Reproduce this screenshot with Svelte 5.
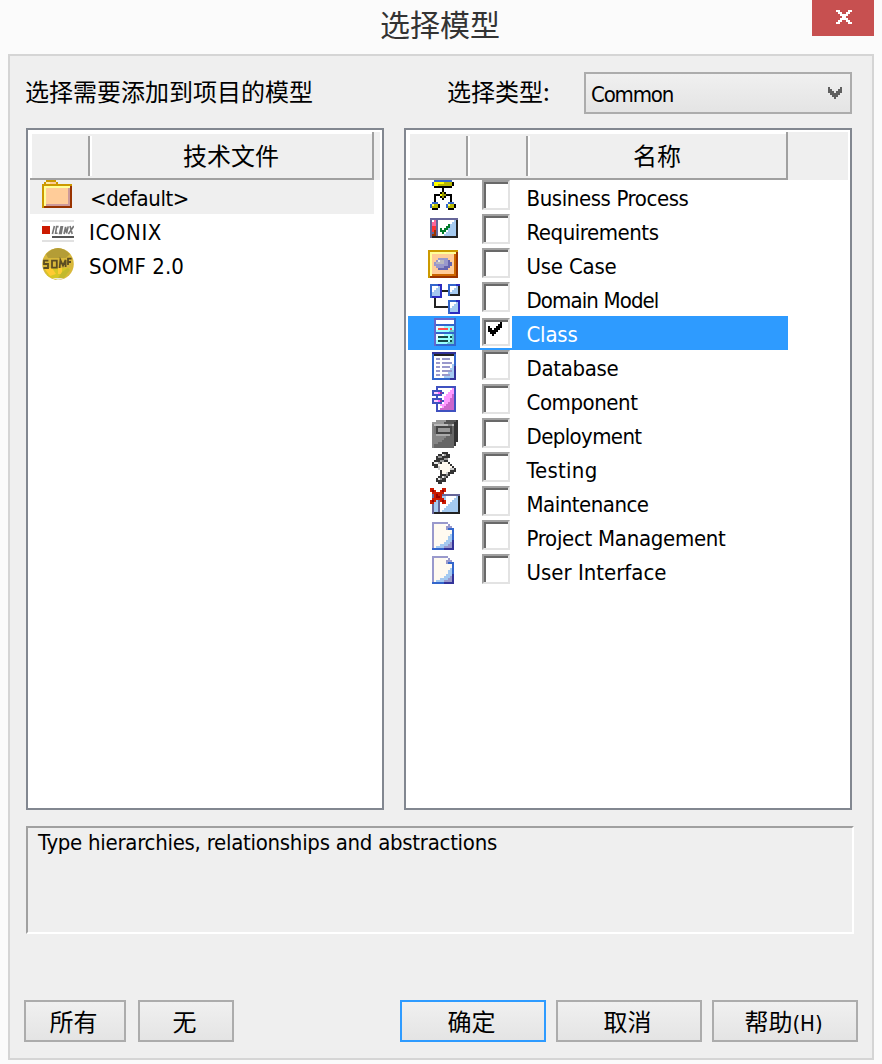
<script>
  const files = [
    { name: '<default>', icon: 'folder', w: 99, pad: 2 },
    { name: 'ICONIX', icon: 'iconix', w: 73, pad: 0 },
    { name: 'SOMF 2.0', icon: 'somf', w: 95, pad: 0 }
  ];
  const models = [
    { name: 'Business Process', icon: 'process', w: 162 },
    { name: 'Requirements', icon: 'requirements', w: 132 },
    { name: 'Use Case', icon: 'usecase', w: 90 },
    { name: 'Domain Model', icon: 'domain', w: 132 },
    { name: 'Class', icon: 'class', w: 51 },
    { name: 'Database', icon: 'database', w: 92 },
    { name: 'Component', icon: 'component', w: 111 },
    { name: 'Deployment', icon: 'deployment', w: 115 },
    { name: 'Testing', icon: 'testing', w: 71 },
    { name: 'Maintenance', icon: 'maintenance', w: 122 },
    { name: 'Project Management', icon: 'page', w: 199 },
    { name: 'User Interface', icon: 'page', w: 140 }
  ];
  let profile = $state('<default>');
  let current = $state('Class');
  let checked = $state({ Class: true });

  // Spreads the letters so that a label takes the given width.
  function fit(node, width) {
    const natural = node.getBoundingClientRect().width;
    node.style.letterSpacing = (width - natural) / node.textContent.length + 'px';
  }
</script>

{#snippet node(x, y, h)}
  <path fill="#3366cc" d="M{x} {y}h6v{h}h-6z" />
  <path fill="#2b2bc0" d="M{x + 4} {y}h2v{h}h-5v-1h3z" />
  <path fill="#a5caf0" d="M{x + 1} {y + 1}h4v{h - 2}h-4z" />
  <path fill="#fff" d="M{x + 1} {y + 1}h3v1h-1v1h-1v1h-1z" />
{/snippet}

{#snippet icon(kind)}
  <svg class="icon" viewBox="0 0 16 17" shape-rendering="crispEdges" aria-hidden="true">
    {#if kind === 'folder'}
      <path fill="#cc9900" d="M2 0h5v1h1v1h7v12H0V2h1V1h1z" />
      <path fill="#ffe9a8" d="M2 1h5v1H2z" /><path fill="#ffcc99" d="M4 1h3v1H4z" />
      <path fill="#ffff99" d="M1 3h13v10H1z" />
      <path fill="#cc9999" d="M2 12h11V4h1v9H2z" />
      <path fill="#ffcc99" d="M2 4h11v8H2z" />
      <path fill="#993300" d="M1 13h13V3h1v11H1z" />
    {:else if kind === 'iconix'}
      <path fill="#e1e1e1" d="M0 3h16v1H0zM0 13h16v1H0z" />
      <path fill="#cc1a00" d="M0 6h4v4H0z" />
      <path fill="#555" d="M5 11h11v1H5z" />
      <g shape-rendering="auto" fill="none" stroke="#777" stroke-width=".8">
        <path d="M5.2 10l1-4M8.3 6.3h-1L6.8 9.6h1M9.5 6.4l-.7 3.3h.8l.6-3.3zM11 10l.8-3.6.5 3.3.8-3.5M13.2 10l2.7-4M14 6l1.1 4" />
      </g>
    {:else if kind === 'somf'}
      <g shape-rendering="auto">
        <circle cx="8" cy="8" r="7.9" fill="#d8b83b" />
        <path fill="#b49d36" d="M2 3Q8-3 14 3L12 5H3z" />
        <path fill="#d6c724" d="M1 10h13l-2 4-5 2-4-2z" />
        <path fill="#ffcb32" d="M1 10h4l2 3-3 1zM8 10h2v3H8z" />
        <path fill="#c2b92d" d="M10 12l3-2 1 1-3 4H8z" />
        <g fill="none" stroke="#5c4d22" stroke-width=".9">
          <path d="M3.2 6.3H1V8h2v2H.7M5 6.3h2.4v3.5H5zM8.8 10l.4-4 1.3 2.8L11.8 6v3.5M13 8.5V5.3h1.8M13 7h1.5" />
        </g>
        <path fill="#ece8d8" d="M5 15h6l-3 1z" />
      </g>
    {:else if kind === 'process'}
      <path fill="#3366cc" d="M3 0h9v1H3z" />
      <path fill="#b8b800" d="M2 1h10v2H2z" /><path fill="#ffff00" d="M3 1h5v1H5v1H3z" />
      <path fill="#3366cc" d="M2 1h1v2H2z" />
      <path fill="#000" d="M12 1h1v2h-1zM3 3h9v1H8v2h1v1h3v4h-1V8H9v1H8v1H7V9H6V8H4v3H3V7h3V6h1V4H3z" />
      <path fill="#999900" d="M7 6h1v1h1v1H8v1H7V8H6V7h1z" /><path fill="#ffff00" d="M6 7h1v1H6z" />
      {#each [1, 9] as x}
        <path fill="#3366cc" d="M{x + 1} 11h3v1h-3v2h-1v-2h1z" />
        <path fill="#000" d="M{x + 4} 12h1v2h-1v1h-3v-1h3z" />
        <path fill="#b8b800" d="M{x + 1} 12h3v2h-3z" />
        <path fill="#ffff66" d="M{x + 1} 12h1v1h-1z" />
      {/each}
    {:else if kind === 'requirements'}
      <path fill="#666699" d="M1 2h14v10H1z" />
      <path fill="#222" d="M14 3h1v9H2v-1h12z" />
      <path fill="#ff6699" d="M2 3h2v3H2z" /><path fill="#ff3333" d="M2 6h2v3H2z" /><path fill="#993300" d="M3 8h1v3H2v-1h1z" /><path fill="#fff" d="M2 3h1v1H2z" />
      <path fill="#a5caf0" d="M5 3h9v8H5z" />
      <path fill="#fff" d="M5 3h8v1h-1v1h-1v2h-1v2H9v1H8v1H5z" />
      <path fill="#007a29" d="M10 5h1v2h-1v1H9v1H8v1H7V9H6V7h1v1h1V7h1V6h1z" />
    {:else if kind === 'usecase'}
      <path fill="#cc9900" d="M0 1h15v14H0z" />
      <path fill="#ffff99" d="M1 2h13v12H1z" />
      <path fill="#993300" d="M1 14h13V2h1v13H1z" />
      <path fill="#cc6600" d="M2 13h11V3h1v11H2z" />
      <path fill="#ffcc99" d="M2 3h11v10H2z" />
      <path fill="#9999cc" d="M5 5h5v1h1v1h1v2h-1v1h-1v1H5v-1H4V9H3V7h1V6h1z" />
      <path fill="#6666b0" d="M10 6h1v1h1v2h-1v1h-1v1H5v-1h3V9h2z" />
      <path fill="#b8b8c0" d="M5 6h3v2H4V7h1z" /><path fill="#e8e8e8" d="M5 6h1v1H5z" />
    {:else if kind === 'domain'}
      <path fill="#222" d="M7 4h3v1H7zM4 8h-1v5h7v-1H4z" />
      {@render node(1, 1, 7)}
      {@render node(10, 1, 6)}
      <path fill="#222" d="M15 2h1v5h-5V6h4z" />
      {@render node(10, 9, 7)}
    {:else if kind === 'class'}
      <path fill="#3366cc" d="M3 1h11v14H3z" /><path fill="#6666cc" d="M3 1h10v1H4v13H3z" />
      <path fill="#fff" d="M4 2h9v2H4z" />
      <path fill="#99ffff" d="M4 5h9v3H4zM4 9h9v5H4z" />
      <path fill="#66cccc" d="M11 7h2v1h-3zM10 13h3v1H9zM12 9h1v5h-1z" />
      <path fill="#e9ffff" d="M4 5h4v1H5v1H4zM4 9h4v1H5v2H4z" />
      <path fill="#ff4d4d" d="M5 6h5v1H5zM11 6h1v1h-1z" />
      <path fill="#174b4b" d="M5 10h5v1H5zM11 10h1v1h-1zM5 12h5v1H5zM11 12h1v1h-1z" />
    {:else if kind === 'database'}
      <path fill="#3366cc" d="M2 1h12v14H2z" /><path fill="#333399" d="M2 1h12v1H2zM13 8h1v7h-3v-1h2z" />
      <path fill="#222" d="M3 2h10v1H3z" />
      <path fill="#fff" d="M3 3h10v11H3z" />
      <path fill="#a5caf0" d="M13 7v7H8v-1h1v-1h1v-2h1V9h1V7z" />
      <path fill="#9999cc" d="M4 4h2v1H4zM7 4h4v1H7zM4 6h2v1H4zM7 6h5v1H7zM4 8h2v1H4zM7 8h4v1H7zM4 10h2v1H4zM7 10h5v1H7zM4 12h2v1H4zM7 12h4v1H7z" />
    {:else if kind === 'component'}
      <path fill="#3f51c0" d="M4 1h10v13H4z" />
      <path fill="#ff99ff" d="M5 2h8v11H5z" />
      <path fill="#fff" d="M5 2h7v1h-1v1h-1v1H9v1H8v5H7v1H6v1H5z" />
      <path fill="#ff99ff" d="M8 6h1V5h2v3h-1v1H9v1H8v1H6v-1h2z" />
      <path fill="#cc66cc" d="M13 5v8H6v-1h2v-1h1v-1h1V9h1V7h1V5z" />
      {#each [3, 7] as y}
        <path fill="#3f51c0" d="M2 {y}h5v1h1v1h-1v1h-5z" />
        <path fill="#ffccff" d="M3 {y + 1}h2v1h-2z" /><path fill="#ff66ff" d="M5 {y + 1}h1v1h-1z" /><path fill="#993399" d="M6 {y + 1}h1v1h-1z" />
      {/each}
    {:else if kind === 'deployment'}
      <path fill="#333" d="M4 1h11v11h-1v2h-1v1h-1V3h1V2h1z" />
      <path fill="#999" d="M4 1h9v1h-1v1H2V2h2z" /><path fill="#555" d="M9 1h5v1H9zM8 2h5v1H8z" />
      <path fill="#666" d="M2 3h11v12H2z" />
      <path fill="#858585" d="M2 3h10v1H3v11H2zM3 8h7v1H9v1H8v1H7v1H5v1H3z" />
      <path fill="#bbb" d="M3 3h7v1H3zM12 3h1v1h-1z" />
      <path fill="#777" d="M3 4h9v4H3z" />
      <path fill="#444" d="M4 4h8v4H4z" /><path fill="#999" d="M5 5h6v2H5z" />
      <path fill="#aaa" d="M4 8h7v1H4z" />
    {:else if kind === 'testing'}
      <path fill="#333" d="M7 0h3v1h1v2h-1v2h1v1h1v1h1v1h1v2h-1v1h-2v1h-1v1H9v2H7v1H5v-1H4v-2h1v-1h1V9H5V8H3V7H2V5h1V4h1V2h1V1h2z" />
      <path fill="#999" d="M7 1h2v1H7v1H5V2h2zM4 5h2V4h2V3h2v1H8v1H6v1H4z" />
      <path fill="#e8e8e8" d="M7 1h1v1H7zM3 5h2v1H3z" />
      <path fill="#fffaf0" d="M5 6h2V5h3v1h1v1h1v2h-1v1H9v1H7V9H6V8H5z" />
      <path fill="#ccc" d="M4 7h2v1H5V7zM5 8h1v1H5zM11 8h2v1h-2zM9 10h1v1H9z" />
      <path fill="#888" d="M5 13h2v-1h2v-1h1v1H9v1H7v1H5z" />
      <path fill="#e8e8e8" d="M5 13h1v1H5zM7 12h1v1H7z" />
    {:else if kind === 'maintenance'}
      <path fill="#666699" d="M2 4h14v10H2z" /><path fill="#222" d="M15 5h1v9H3v-1h12z" />
      <path fill="#a5caf0" d="M3 5h12v8H3z" /><path fill="#666699" d="M5 5h1v8H5z" />
      <path fill="#fff" d="M9 5h5v1h-1v1h-1v1h-1v1h-1v1H9v1H8v1H7v1H6V8h3z" />
      <path fill="#cc1a00" d="M1 1h2v1h1v1h2V2h1V1h2v2H8v1H7v2h1v1h1v2H7V8H6V7H4v1H3v1H1V7h1V6h1V4H2V3H1z" />
      <path fill="#990000" d="M4 4h1v1h1v1H4zM7 7h1v1H7zM2 2h1v1H2zM2 7h1v1H2zM7 2h1v1H7z" />
    {:else if kind === 'page'}
      <path fill="#9999cc" d="M2 1h8v1h1v1h1v1h1v11H2z" />
      <path fill="#fff" d="M10 1h3v2h-1V2h-2z" />
      <path fill="#fffaf0" d="M3 2h6v3h3v9H3z" />
      <path fill="#3366cc" d="M10 4h3v5h-1V5h-2zM2 14h6v1H2zM12 5h1v5h-1z" />
      <path fill="#fff" d="M9 2h1v1H9z" />
      <path fill="#a5caf0" d="M12 7v7H4v-1h2v-1h2v-1h1v-1h1V8h1V7z" />
      <path fill="#9999cc" d="M12 11v3H8v-1h2v-1h1v-1z" />
      <path fill="#333399" d="M12 10h1v5H8v-1h4z" />
    {/if}
  </svg>
{/snippet}

<div class="window">
  <header class="titlebar">
    <h1>选择模型</h1>
    <button class="close" aria-label="关闭">
      <svg viewBox="0 0 8 7" shape-rendering="crispEdges"><path fill="#fff" d="M0 0h2v1h1v1h2V1h1V0h2v1H7v1H6v1H5v1h1v1h1v1h1v1H6V6H5V5H3v1H2v1H0V6h1V5h1V4h1V3H2V2H1V1H0z" /></svg>
    </button>
  </header>

  <main>
    <div class="top">
      <span class="prompt">选择需要添加到项目的模型</span>
      <span class="type">选择类型:</span>
      <button class="select">
        <span use:fit={82}>Common</span>
        <svg viewBox="0 0 7 6" shape-rendering="crispEdges"><path fill="#606060" d="M0 0h1v1h1v1h1v1h1V2h1V1h1V0h1v3H6v1H5v1H4v1H3V5H2V4H1V3H0z" /></svg>
      </button>
    </div>

    <div class="lists">
      <section class="panel files">
        <div class="head">
          <div class="cell"></div>
          <div class="cell last">技术文件</div>
          <div class="rest"></div>
        </div>
        {#each files as f}
          <div class="row" class:soft={f.name === profile} onclick={() => (profile = f.name)} role="presentation">
            {@render icon(f.icon)}
            <div class="label" class:indent={f.pad}><span use:fit={f.w}>{f.name}</span></div>
          </div>
        {/each}
      </section>

      <section class="panel models">
        <div class="head">
          <div class="cell"></div>
          <div class="cell"></div>
          <div class="cell last">名称</div>
          <div class="rest"></div>
        </div>
        {#each models as m}
          <div class="row" class:active={m.name === current} onclick={() => (current = m.name)} role="presentation">
            {@render icon(m.icon)}
            <button class="check" aria-label={m.name} onclick={() => (checked[m.name] = !checked[m.name])}>
              <span class="box">
                {#if checked[m.name]}
                  <svg viewBox="0 0 7 7" shape-rendering="crispEdges"><path d="M6 0h1v3H6v1H5v1H4v1H3v1H2V6H1V5H0V2h1v1h1v1h1V3h1V2h1V1h1z" /></svg>
                {/if}
              </span>
            </button>
            <div class="label"><span use:fit={m.w}>{m.name}</span></div>
          </div>
        {/each}
      </section>
    </div>

    <div class="description"><span use:fit={459}>Type hierarchies, relationships and abstractions</span></div>

    <footer>
      <button class="btn all">所有</button>
      <button class="btn none">无</button>
      <button class="btn primary">确定</button>
      <button class="btn">取消</button>
      <button class="btn">帮助<span use:fit={30}>(H)</span></button>
    </footer>
  </main>
</div>

<style>
  :global(body) { margin: 0; background: #fbfbfb; }
  * { box-sizing: border-box; }
  .window {
    width: 882px; height: 1064px; padding: 0 8px 4px; background: #fbfbfb; color: #000;
    display: flex; flex-direction: column;
    font: 22px "DejaVu Sans Condensed", "DejaVu Sans", "Noto Sans CJK SC", sans-serif;
    font-stretch: condensed; white-space: nowrap; overflow: hidden;
  }
  button { font: inherit; color: inherit; padding: 0; border: 0; border-radius: 0; background: none; }
  svg { display: block; flex: none; }
  h1, .prompt, .type, .cell, .btn { font-family: "Noto Sans CJK SC", sans-serif; font-stretch: normal; font-weight: 400; }
  .titlebar { height: 54px; display: grid; grid-template-columns: 62px 1fr 62px; align-items: start; }
  h1 { grid-column: 2; margin: 0; text-align: center; font-size: 30px; line-height: 47px; color: #333; padding-right: 2px; }
  .close { width: 62px; height: 36px; background: #c75050; display: grid; place-items: center; padding: 0 0 2px 2px; }
  .close svg { width: 16px; height: 14px; }
  main { flex: 1; border: 2px solid #d5d5d5; background: #efefef; padding: 16px 14px; display: flex; flex-direction: column; }
  .top { height: 42px; display: flex; align-items: center; padding: 0 6px 0 1px; font-size: 24px; }
  .prompt, .type { line-height: 36px; padding-bottom: 5px; }
  .prompt { width: 422px; }
  .type { width: 137px; }
  .select {
    width: 268px; height: 42px; border: 2px solid #acacac; background: linear-gradient(#f0f0f0, #e4e4e4);
    display: flex; align-items: center; justify-content: space-between; padding: 2px 8px 0 5px;
    font-size: 22px; text-align: left; flex: none;
  }
  .select svg { width: 14px; height: 12px; margin-top: -2px; }
  .lists { display: flex; gap: 20px; margin: 14px 0 0 2px; }
  .panel { height: 682px; background: #fff; border: 2px solid #828790; padding: 2px; }
  .files { width: 358px; }
  .models { width: 448px; }
  .head { display: grid; height: 48px; }
  .files .head { grid-template-columns: 60px 284px 6px; }
  .models .head { grid-template-columns: 60px 60px 260px 60px; }
  .cell {
    position: relative; border-bottom: 2px solid #a0a0a0; font-size: 24px; line-height: 46px; text-align: center;
    background: linear-gradient(#fff, #fff) top / 100% 2px no-repeat, #efefef;
  }
  .cell:first-child { border-left: 0; box-shadow: inset 2px 0 #fff; }
  .cell:not(.last)::after {
    content: ""; position: absolute; right: 0; top: 4px; width: 2px; height: 40px; background: #a0a0a0; box-shadow: 2px 0 #fff; z-index: 1;
  }
  .last { border-right: 2px solid #a0a0a0; }
  .rest { background: #efefef; }
  .row { height: 34px; display: flex; }
  .files .row { width: 344px; padding-left: 12px; }
  .models .row { width: 380px; padding-left: 20px; }
  .icon { width: 32px; height: 34px; }
  .soft { background: #efefef; }
  .active { background: #2e9bff; color: #fff; }
  .label { padding-left: 15px; line-height: 34px; padding-top: 2px; }
  .label.indent { padding-left: 16px; }
  .models .label { padding-left: 14.5px; }
  .check { width: 32px; height: 32px; margin-left: 20px; padding: 0 2px; flex: none; display: flex; align-items: flex-start; }
  .box {
    display: block; width: 28px; height: 30px; background: #fff;
    border: 2px solid #a0a0a0; border-right-color: #e3e3e3; border-bottom-color: #e3e3e3;
    box-shadow: inset 2px 2px #696969; padding: 2px 4px;
  }
  .active .check { background: #fff; padding-top: 2px; }
  .active .box { height: 28px; }
  .box svg { width: 14px; height: 14px; }
  .description {
    height: 108px; margin: 16px 0 0 2px; width: 828px; border: 2px solid #a0a0a0;
    border-right-color: #fff; border-bottom-color: #fff; padding: 0 10px; line-height: 30px;
  }
  footer { display: flex; gap: 10px; margin-top: 66px; }
  .btn {
    width: 146px; height: 42px; border: 2px solid #acacac; background: linear-gradient(#f0f0f0, #e4e4e4);
    font-size: 24px; line-height: 38px; text-align: center; padding-right: 3px;
  }
  .btn span { font: 22px "DejaVu Sans Condensed", "DejaVu Sans", sans-serif; }
  .all { width: 102px; margin-right: 2px; }
  .none { width: 96px; margin-right: 156px; }
  .primary { border-color: #2e9bff; }
</style>
